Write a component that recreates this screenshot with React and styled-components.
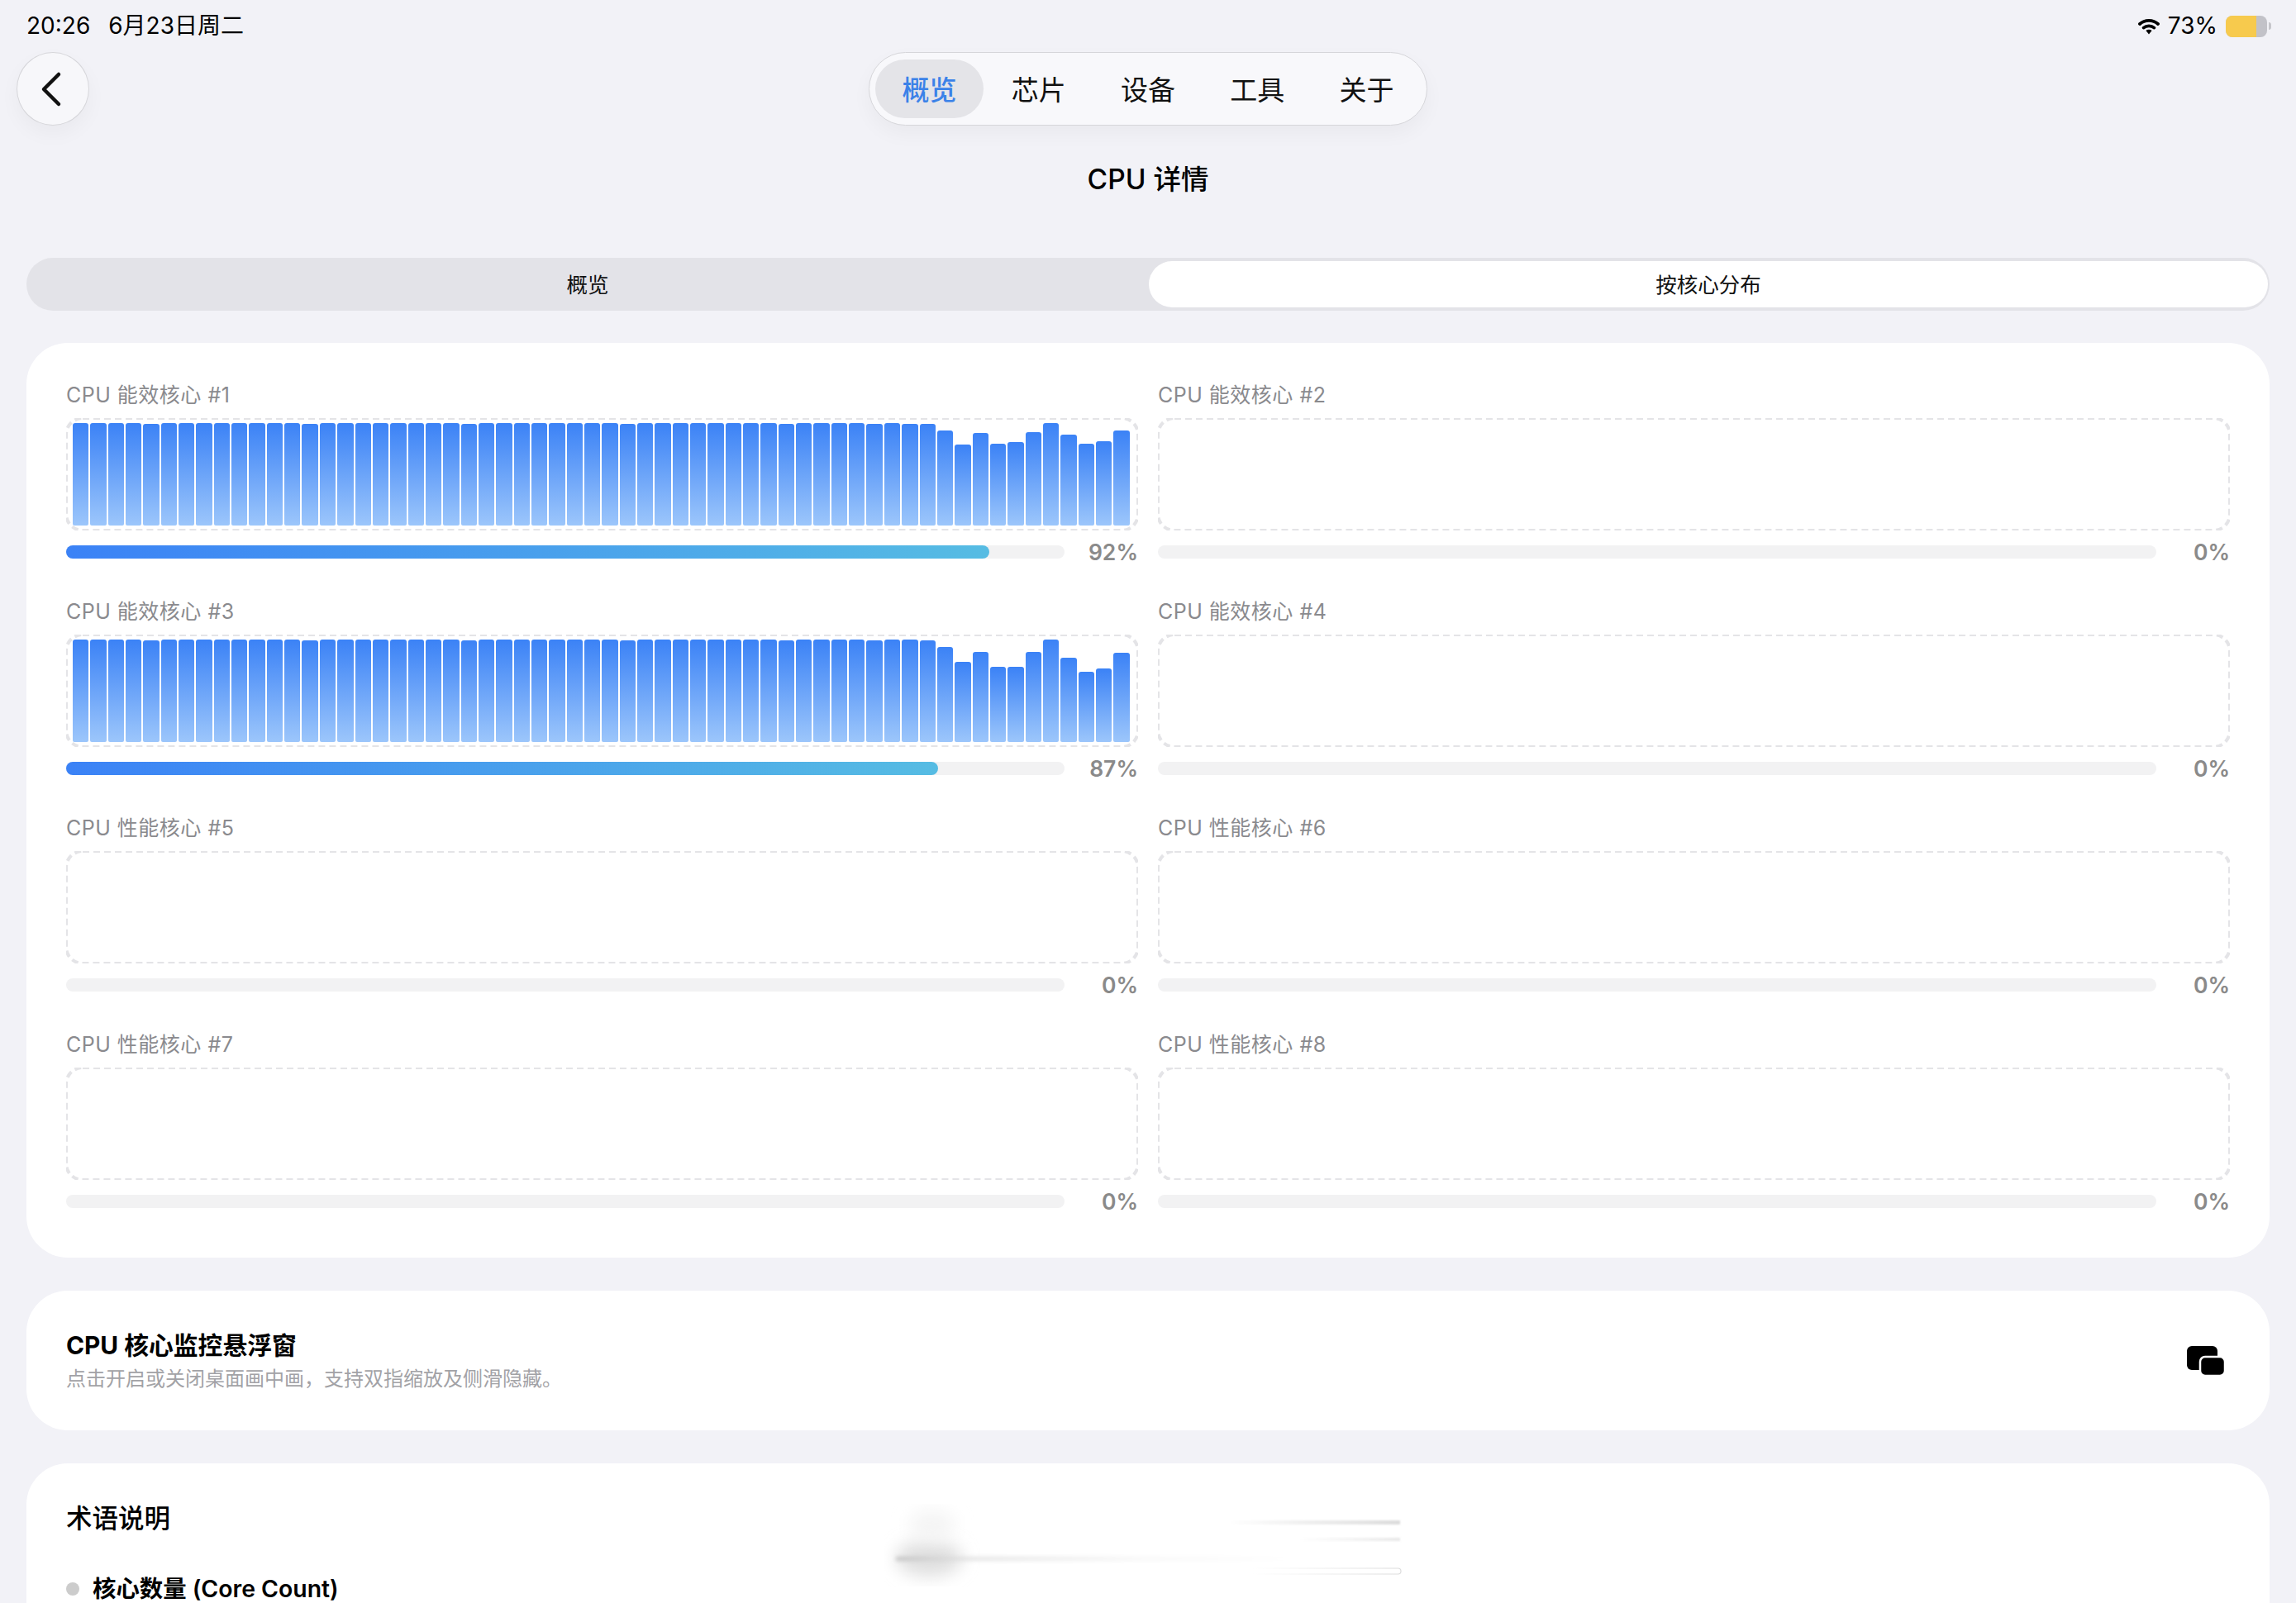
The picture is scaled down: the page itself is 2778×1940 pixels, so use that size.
import React from 'react';
import styled, { createGlobalStyle } from 'styled-components';

const GlobalStyle = createGlobalStyle`
  html, body {
    margin: 0;
    padding: 0;
    background-color: #f2f2f7;
  }
  body {
    font-family: 'Inter', 'Noto Sans CJK SC', sans-serif;
    color: #000000;
  }
  * {
    box-sizing: border-box;
  }
`;

const Page = styled.div`
  height: 1940px;
  overflow: hidden;
  background-color: #f2f2f7;
`;

const StatusBar = styled.div`
  display: flex;
  justify-content: space-between;
  align-items: center;
  height: 63px;
  padding: 0 30px 0 32px;
  font-size: 28px;
  line-height: 63px;
`;

const StatusLeft = styled.div`
  display: flex;
  gap: 22px;
`;

const StatusRight = styled.div`
  display: flex;
  align-items: center;
  gap: 10px;
`;

const Battery = styled.div`
  display: flex;
  align-items: center;
  gap: 2px;
`;

const BatteryBody = styled.div`
  width: 50px;
  height: 26px;
  border-radius: 8px;
  overflow: hidden;
  background-color: #c2c2c8;
`;

const BatteryLevel = styled.div`
  height: 100%;
  background-color: #f7ca4d;
`;

const BatteryNub = styled.div`
  width: 3px;
  height: 9px;
  border-radius: 0 4px 4px 0;
  background-color: #c6c6cb;
`;

const Header = styled.div`
  display: grid;
  grid-template-columns: 1fr auto 1fr;
  align-items: center;
  padding: 0 20px;
`;

const BackButton = styled.div`
  display: flex;
  align-items: center;
  justify-content: center;
  width: 88px;
  height: 89px;
  border-radius: 50%;
  background-color: #f7f7fa;
  border: 1.5px solid #d6d6da;
  box-shadow: 0 10px 24px rgba(0, 0, 0, 0.04);
`;

const BackIcon = styled.svg`
  width: 28px;
  height: 44px;
  margin-right: 6px;
`;

const NavPill = styled.div`
  display: grid;
  grid-template-columns: repeat(5, 1fr);
  gap: 1px;
  width: 676px;
  height: 89px;
  padding: 8px 7px;
  border-radius: 45px;
  background-color: #f8f8fb;
  border: 1.5px solid #d6d6da;
  box-shadow: 0 10px 24px rgba(0, 0, 0, 0.04);
`;

const NavItem = styled.div`
  display: flex;
  align-items: center;
  justify-content: center;
  padding-bottom: 2px;
  border-radius: 36px;
  font-size: 33px;
  font-weight: ${props => (props.$active ? 500 : 400)};
  color: ${props => (props.$active ? '#3b82e8' : '#111111')};
  background-color: ${props => (props.$active ? '#e4e4e8' : 'transparent')};
`;

const Title = styled.h1`
  margin: 43px 0 73px;
  font-size: 33.5px;
  line-height: 44px;
  font-weight: 500;
  text-align: center;
`;

const Content = styled.div`
  display: flex;
  flex-direction: column;
  padding: 0 32px;
`;

const Segmented = styled.div`
  display: grid;
  grid-template-columns: 1fr 1fr;
  column-gap: 2px;
  height: 64px;
  padding: 4px 2px;
  margin-bottom: 39px;
  border-radius: 32px;
  background-color: #e3e3e8;
`;

const Segment = styled.div`
  display: flex;
  align-items: center;
  justify-content: center;
  padding-bottom: 4px;
  border-radius: 28px;
  font-size: 25.5px;
  color: #111111;
  background-color: ${props => (props.$active ? '#ffffff' : 'transparent')};
`;

const Card = styled.div`
  position: relative;
  border-radius: 50px;
  background-color: #ffffff;
`;

const CoreCard = styled(Card)`
  display: grid;
  grid-template-columns: 1fr 1fr;
  column-gap: 24px;
  row-gap: 41px;
  height: 1107px;
  padding: 47px 48px 53px;
  margin-bottom: 40px;
`;

const Core = styled.div`
  display: flex;
  flex-direction: column;
`;

const CoreLabel = styled.div`
  height: 30px;
  margin-bottom: 14px;
  font-size: 25px;
  line-height: 33px;
  letter-spacing: 0.5px;
  color: #8a8a8e;
`;

const ChartBox = styled.div`
  display: flex;
  align-items: flex-end;
  gap: 2px;
  height: 136px;
  padding: 6px 10px 6px 8px;
  background-image: url("data:image/svg+xml,%3csvg width='100%25' height='100%25' xmlns='http://www.w3.org/2000/svg'%3e%3crect width='100%25' height='100%25' fill='none' rx='20' ry='20' stroke='%23e4e4e7' stroke-width='4' stroke-dasharray='8%2c5'/%3e%3c/svg%3e");
`;

const Bar = styled.div`
  flex: 1;
  border-radius: 3px 3px 2px 2px;
  background: linear-gradient(180deg, #3b82f6 0%, #9cc6fb 100%);
`;

const ProgressRow = styled.div`
  display: flex;
  align-items: center;
  height: 30px;
  margin-top: 11px;
`;

const ProgressTrack = styled.div`
  width: 1208px;
  height: 16px;
  border-radius: 8px;
  background-color: #f2f2f3;
`;

const ProgressFill = styled.div`
  height: 100%;
  border-radius: 8px;
  background: linear-gradient(90deg, #3b82f6 0%, #56bce3 100%);
`;

const Percent = styled.div`
  flex: 1;
  font-size: 26.5px;
  font-weight: 600;
  line-height: 30px;
  text-align: right;
  color: #8a8a8a;
`;

const FloatCard = styled(Card)`
  display: flex;
  align-items: center;
  justify-content: space-between;
  height: 169px;
  padding: 0 54px 0 48px;
  margin-bottom: 40px;
`;

const FloatTitle = styled.div`
  font-size: 29.8px;
  line-height: 40px;
  font-weight: 700;
`;

const FloatHint = styled.div`
  margin-top: 5px;
  font-size: 24px;
  line-height: 32px;
  color: #a2a2a6;
`;

const GlossaryCard = styled(Card)`
  height: 400px;
  padding: 45px 48px 0;
`;

const GlossaryTitle = styled.div`
  font-size: 31.5px;
  line-height: 44px;
  font-weight: 500;
`;

const GlossaryItem = styled.div`
  display: flex;
  align-items: center;
  gap: 16px;
  margin-top: 43px;
  font-size: 28.4px;
  line-height: 40px;
  font-weight: 600;
`;

const Dot = styled.span`
  width: 16px;
  height: 16px;
  border-radius: 50%;
  background-color: #cccccc;
`;

const Smear = styled.svg`
  position: absolute;
  left: 1038px;
  top: 49px;
  width: 640px;
  height: 100px;
`;

const coreOneTail = [124, 124, 123, 124, 123, 123, 115, 98, 112, 99, 101, 113, 124, 110, 99, 102, 115];
const coreThreeTail = [123, 124, 124, 123, 115, 97, 109, 91, 91, 109, 124, 102, 85, 89, 108];

const fullBars = (count) => Array.from({ length: count }, (_, i) => (i % 9 === 4 ? 123 : 124));

const cores = [
  { name: 'CPU 能效核心 #1', percent: 92, width: 92.5, bars: [...fullBars(43), ...coreOneTail] },
  { name: 'CPU 能效核心 #2', percent: 0 },
  { name: 'CPU 能效核心 #3', percent: 87, width: 87.3, bars: [...fullBars(45), ...coreThreeTail] },
  { name: 'CPU 能效核心 #4', percent: 0 },
  { name: 'CPU 性能核心 #5', percent: 0 },
  { name: 'CPU 性能核心 #6', percent: 0 },
  { name: 'CPU 性能核心 #7', percent: 0 },
  { name: 'CPU 性能核心 #8', percent: 0 },
];

const navItems = ['概览', '芯片', '设备', '工具', '关于'];

const WifiIcon = () => (
  <svg width="26" height="21" viewBox="0 0 26 21">
    <path d="M2 8 C8 2.4 18 2.4 24 8" fill="none" stroke="#000" strokeWidth="3.8" strokeLinecap="round" />
    <path d="M6.6 12.6 C10.2 9.6 15.8 9.6 19.4 12.6" fill="none" stroke="#000" strokeWidth="3.8" strokeLinecap="round" />
    <path d="M9.4 16 C11.6 14.2 14.4 14.2 16.6 16 L13 20.4 Z" fill="#000" />
  </svg>
);

const WindowsIcon = () => (
  <svg width="46" height="36" viewBox="0 0 46 36">
    <rect x="0" y="0" width="37" height="29" rx="6" fill="#000" />
    <rect x="16" y="13" width="30" height="23" rx="6" fill="#000" stroke="#fff" strokeWidth="2.5" />
  </svg>
);

const App = () => {
  return (
    <>
      <GlobalStyle />
      <Page lang="zh-CN">
        <StatusBar>
          <StatusLeft>
            <span>20:26</span>
            <span>6月23日周二</span>
          </StatusLeft>
          <StatusRight>
            <WifiIcon />
            <span>73%</span>
            <Battery>
              <BatteryBody>
                <BatteryLevel style={{ width: '73%' }} />
              </BatteryBody>
              <BatteryNub />
            </Battery>
          </StatusRight>
        </StatusBar>

        <Header>
          <BackButton>
            <BackIcon viewBox="0 0 28 44">
              <polyline
                points="24,4 6,22 24,40"
                fill="none"
                stroke="#111"
                strokeWidth="4.5"
                strokeLinecap="round"
                strokeLinejoin="round"
              />
            </BackIcon>
          </BackButton>
          <NavPill>
            {navItems.map((item, index) => (
              <NavItem key={item} $active={index === 0}>{item}</NavItem>
            ))}
          </NavPill>
        </Header>

        <Title>CPU 详情</Title>

        <Content>
          <Segmented>
            <Segment>概览</Segment>
            <Segment $active>按核心分布</Segment>
          </Segmented>

          <CoreCard>
            {cores.map((core) => (
              <Core key={core.name}>
                <CoreLabel>{core.name}</CoreLabel>
                <ChartBox>
                  {core.bars && core.bars.map((height, index) => (
                    <Bar key={index} style={{ height: `${height}px` }} />
                  ))}
                </ChartBox>
                <ProgressRow>
                  <ProgressTrack>
                    {core.percent > 0 && <ProgressFill style={{ width: `${core.width}%` }} />}
                  </ProgressTrack>
                  <Percent>{core.percent}%</Percent>
                </ProgressRow>
              </Core>
            ))}
          </CoreCard>

          <FloatCard>
            <div>
              <FloatTitle>CPU 核心监控悬浮窗</FloatTitle>
              <FloatHint>点击开启或关闭桌面画中画，支持双指缩放及侧滑隐藏。</FloatHint>
            </div>
            <WindowsIcon />
          </FloatCard>

          <GlossaryCard>
            <GlossaryTitle>术语说明</GlossaryTitle>
            <GlossaryItem>
              <Dot />
              核心数量 (Core Count)
            </GlossaryItem>
            <Smear viewBox="0 0 640 100">
              <defs>
                <filter id="soft" x="-60%" y="-60%" width="220%" height="220%">
                  <feGaussianBlur stdDeviation="10" />
                </filter>
                <filter id="line" x="-10%" y="-500%" width="120%" height="1100%">
                  <feGaussianBlur stdDeviation="2.5" />
                </filter>
                <filter id="thin" x="-10%" y="-300%" width="120%" height="700%">
                  <feGaussianBlur stdDeviation="1.2" />
                </filter>
                <linearGradient id="fadeRight" x1="0" x2="1" y1="0" y2="0">
                  <stop offset="0" stopColor="#c4c4c4" />
                  <stop offset="0.18" stopColor="#e4e4e4" />
                  <stop offset="0.6" stopColor="#f8f8f8" />
                  <stop offset="1" stopColor="#ffffff" />
                </linearGradient>
                <linearGradient id="fadeLeft" x1="0" x2="1" y1="0" y2="0">
                  <stop offset="0" stopColor="#ffffff" />
                  <stop offset="1" stopColor="#dcdcdc" />
                </linearGradient>
              </defs>
              <ellipse cx="54" cy="66" rx="40" ry="22" fill="#dfdfdf" filter="url(#soft)" />
              <ellipse cx="58" cy="26" rx="28" ry="18" fill="#f4f4f4" filter="url(#soft)" />
              <rect x="14" y="64" width="500" height="5" fill="url(#fadeRight)" filter="url(#line)" />
              <rect x="416" y="20" width="208" height="5" fill="url(#fadeLeft)" filter="url(#thin)" />
              <rect x="500" y="41" width="124" height="4" fill="url(#fadeLeft)" opacity="0.6" filter="url(#thin)" />
              <rect x="445" y="78" width="180" height="7" rx="3.5" fill="none" stroke="url(#fadeLeft)" strokeWidth="1.2" />
            </Smear>
          </GlossaryCard>
        </Content>
      </Page>
    </>
  );
};

export default App;
